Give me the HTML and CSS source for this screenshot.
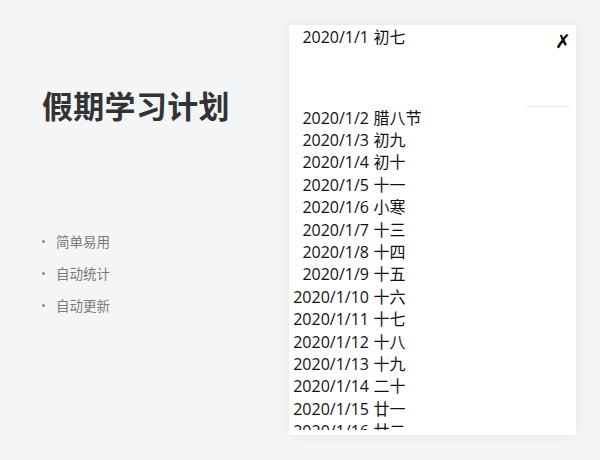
FILE: index.html
```html
<!DOCTYPE html>
<html lang="zh-CN">
<head>
<meta charset="utf-8">
<title>假期学习计划</title>
<link rel="stylesheet" href="styles.css">
</head>
<body>
<div class="page">
  <section class="intro">
    <h1 class="title">假期学习计划</h1>
    <ul class="features">
      <li>简单易用</li>
      <li>自动统计</li>
      <li>自动更新</li>
    </ul>
  </section>
  <section class="panel">
    <div class="head">
      <div class="row"><span class="date">2020/1/1</span><span class="lunar">初七</span></div>
      <span class="close">✗</span>
    </div>
    <div class="spacer"></div>
    <div class="rule-wrap"><div class="rule"></div></div>
    <div class="list">
      <div class="row"><span class="date">2020/1/2</span><span class="lunar">腊八节</span></div>
      <div class="row"><span class="date">2020/1/3</span><span class="lunar">初九</span></div>
      <div class="row"><span class="date">2020/1/4</span><span class="lunar">初十</span></div>
      <div class="row"><span class="date">2020/1/5</span><span class="lunar">十一</span></div>
      <div class="row"><span class="date">2020/1/6</span><span class="lunar">小寒</span></div>
      <div class="row"><span class="date">2020/1/7</span><span class="lunar">十三</span></div>
      <div class="row"><span class="date">2020/1/8</span><span class="lunar">十四</span></div>
      <div class="row"><span class="date">2020/1/9</span><span class="lunar">十五</span></div>
      <div class="row"><span class="date">2020/1/10</span><span class="lunar">十六</span></div>
      <div class="row"><span class="date">2020/1/11</span><span class="lunar">十七</span></div>
      <div class="row"><span class="date">2020/1/12</span><span class="lunar">十八</span></div>
      <div class="row"><span class="date">2020/1/13</span><span class="lunar">十九</span></div>
      <div class="row"><span class="date">2020/1/14</span><span class="lunar">二十</span></div>
      <div class="row"><span class="date">2020/1/15</span><span class="lunar">廿一</span></div>
      <div class="row"><span class="date">2020/1/16</span><span class="lunar">廿二</span></div>
    </div>
  </section>
</div>
</body>
</html>
```
FILE: styles.css
```css
html, body {
  margin: 0;
  padding: 0;
  background: #f4f5f7;
  font-family: "Open Sans", "Noto Sans CJK SC", sans-serif;
}

.page {
  display: flex;
  align-items: flex-start;
  width: 600px;
  height: 460px;
  overflow: hidden;
}

.intro {
  width: 247px;
  padding: 85px 0 0 42px;
  flex: none;
}

.title {
  margin: 0;
  font-family: "Noto Sans CJK SC", sans-serif;
  font-size: 31px;
  font-weight: 700;
  line-height: 40px;
  color: #333333;
  letter-spacing: 0.3px;
}

.features {
  list-style: none;
  margin: 100px 0 0 0;
  padding: 0;
}

.features li {
  display: flex;
  align-items: center;
  gap: 11px;
  height: 32px;
  font-family: "Noto Sans CJK SC", sans-serif;
  font-size: 13.5px;
  color: #7a7a7a;
}

.features li::before {
  content: "";
  width: 3px;
  height: 3px;
  border-radius: 50%;
  background: #8a8a8a;
}

.panel {
  flex: none;
  width: 287px;
  height: 405px;
  margin-top: 25px;
  padding-bottom: 5px;
  background: #ffffff;
  box-shadow: 0 0 14px rgba(0, 0, 0, 0.07);
  display: flex;
  flex-direction: column;
  color: #111111;
}

.head {
  display: flex;
  justify-content: space-between;
  align-items: flex-start;
  padding: 1px 5px 0 0;
}

.close {
  font-family: "DejaVu Sans", sans-serif;
  font-size: 19px;
  font-weight: 700;
  line-height: 22px;
  color: #000000;
  margin-top: 4px;
}

.spacer {
  height: 53.6px;
  flex: none;
}

.rule-wrap {
  display: flex;
  justify-content: flex-end;
  padding-right: 5px;
}

.rule {
  width: 46px;
  height: 1px;
  background: #ececec;
}

.list {
  flex: 1;
  overflow: hidden;
}

.row {
  display: grid;
  grid-template-columns: 76px auto;
  column-gap: 4.5px;
  padding-left: 4px;
  font-size: 16px;
  line-height: 22.4px;
  white-space: nowrap;
}

.date {
  text-align: right;
}

.lunar {
  text-align: left;
}
```
